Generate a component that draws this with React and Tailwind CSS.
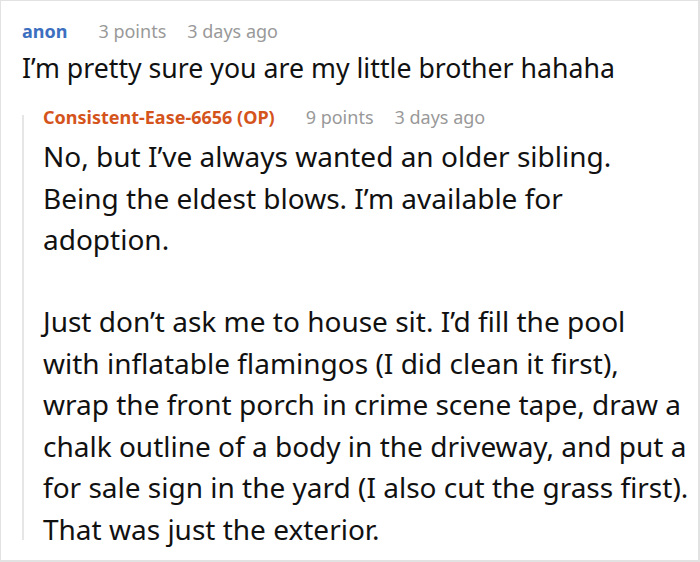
import React from 'react';

const font = { fontFamily: '"Noto Sans", "Open Sans", sans-serif' };

const Meta = ({ name, nameClass, points, age, className = '' }) => (
  <div className={`flex items-baseline text-[18px] leading-[24px] ${className}`}>
    <span className={`font-bold ${nameClass}`}>{name}</span>
    <span className="ml-[31px] text-[#999999]">{points}</span>
    <span className="ml-[21px] text-[#999999]">{age}</span>
  </div>
);

export default function App() {
  return (
    <div style={font} className="w-[700px] h-[562px] bg-white border border-[#e2e2e2] border-b-2 border-r-2 overflow-hidden">
      <div className="pl-[21px] pt-[18px]">
        <Meta name="anon" nameClass="text-[#3d6fc0]" points="3 points" age="3 days ago" />
        <p className="mt-[4px] text-[26.7px] leading-[41px] text-[#111111]">
          I’m pretty sure you are my little brother hahaha
        </p>

        <div className="mt-[17px] flex">
          <div className="w-[2px] shrink-0 bg-[#e6e6e6] mt-[10px] mb-[10px]" />
          <div className="pl-[19px]">
            <Meta name="Consistent-Ease-6656 (OP)" nameClass="text-[#d4541c]" points="9 points" age="3 days ago" />
            <div className="mt-[7px] text-[28px] leading-[41.5px] text-[#111111]">
              <p>
                No, but I’ve always wanted an older sibling.<br />
                Being the eldest blows. I’m available for<br />
                adoption.
              </p>
              <p className="mt-[40.5px]">
                Just don’t ask me to house sit. I’d fill the pool<br />
                with inflatable flamingos (I did clean it first),<br />
                wrap the front porch in crime scene tape, draw a<br />
                chalk outline of a body in the driveway, and put a<br />
                for sale sign in the yard (I also cut the grass first).<br />
                That was just the exterior.
              </p>
            </div>
          </div>
        </div>
      </div>
    </div>
  );
}
